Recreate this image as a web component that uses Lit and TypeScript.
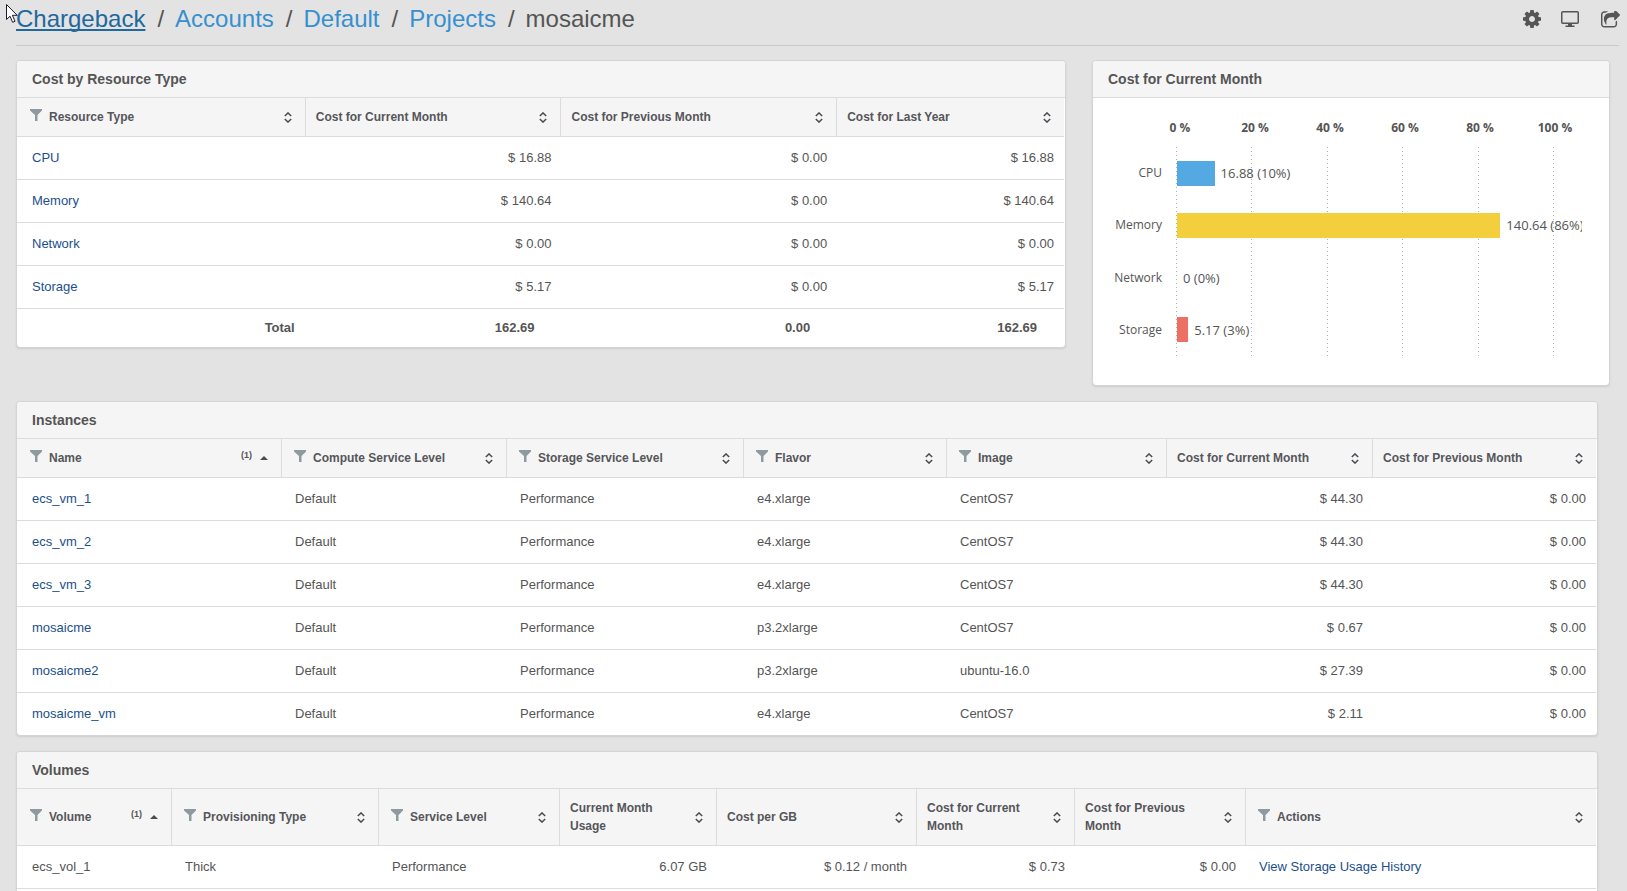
import { LitElement, html, css, svg, nothing } from "lit";
import { customElement, property } from "lit/decorators.js";
import { classMap } from "lit/directives/class-map.js";

interface Column {
  label: string;
  weight: number;
  filter?: boolean;
  sorted?: boolean;
  numeric?: boolean;
  link?: boolean;
}

interface Slice {
  name: string;
  cost: number;
  color: string;
}

const icons = {
  filter: html`<svg width="12" height="12" viewBox="0 0 12 12" aria-hidden="true">
    <path d="M0 0H12V1.5L7.5 6V12H5V6L0 1.5Z" fill="currentColor" />
  </svg>`,
  sort: html`<svg width="8" height="11" viewBox="0 0 8 11" aria-hidden="true">
    <path d="M0.8 4L4 0.9L7.2 4M0.8 7L4 10.1L7.2 7" fill="none" stroke="currentColor" stroke-width="1.5" />
  </svg>`,
  ascending: html`<svg width="8" height="4" viewBox="0 0 8 4" aria-hidden="true">
    <path d="M0 4L4 0L8 4Z" fill="currentColor" />
  </svg>`,
  gear: html`<svg width="18" height="18" viewBox="128 128 1536 1536" aria-hidden="true">
    <path
      fill="currentColor"
      d="M1152 896q0-106-75-181t-181-75-181 75-75 181 75 181 181 75 181-75 75-181zm512-109v222q0 12-8 23t-20 13l-185 28q-19 54-39 91 35 50 107 138 10 12 10 25t-9 23q-27 37-99 108t-94 71q-12 0-26-9l-138-108q-44 23-91 38-16 136-29 186-7 28-36 28h-222q-14 0-24.5-8.5t-11.5-21.5l-28-184q-49-16-90-37l-141 107q-10 9-25 9-14 0-25-11-126-114-165-168-7-10-7-23 0-12 8-23 15-21 51-66.5t54-70.5q-27-50-41-99l-183-27q-13-2-21-12.5t-8-23.5v-222q0-12 8-23t19-13l186-28q14-46 39-92-40-57-107-138-10-12-10-24 0-10 9-23 26-36 98.5-107.5t94.5-71.5q13 0 26 10l138 107q44-23 91-38 16-136 29-186 7-28 36-28h222q14 0 24.5 8.5t11.5 21.5l28 184q49 16 90 37l142-107q9-9 24-9 13 0 25 10 129 119 165 170 7 8 7 22 0 12-8 23-15 21-51 66.5t-54 70.5q26 50 41 98l183 28q13 2 21 12.5t8 23.5z"
    />
  </svg>`,
  screen: html`<svg width="18" height="18" viewBox="0 0 18 18" aria-hidden="true">
    <rect x="0.75" y="1.75" width="16.5" height="11.5" rx="1" fill="none" stroke="currentColor" stroke-width="1.5" />
    <path d="M7 13.5H11V15.5H13.5V17H4.5V15.5H7Z" fill="currentColor" />
  </svg>`,
  share: html`<svg width="19" height="17" viewBox="64 112 1664 1456" aria-hidden="true">
    <path
      fill="currentColor"
      d="M1472 989v259q0 119-84.5 203.5t-203.5 84.5h-832q-119 0-203.5-84.5t-84.5-203.5v-832q0-119 84.5-203.5t203.5-84.5h255q13 0 22.5 9.5t9.5 22.5q0 27-26 32-77 26-133 60-10 4-16 4h-112q-66 0-113 47t-47 113v832q0 66 47 113t113 47h832q66 0 113-47t47-113v-214q0-19 18-29 28-13 54-37 16-16 35-8 21 9 21 31zm237-496l-384 384q-18 19-45 19-12 0-25-5-39-17-39-59v-192h-160q-323 0-438 131-119 137-74 473 3 23-20 34-8 2-12 2-16 0-26-13-10-14-21-31t-39.5-68.5-49.5-99.5-38.5-114-17.5-122q0-49 3.5-91t14-90 28-88 47-81.5 68.5-74 94.5-61.5 124.5-48.5 159.5-30.5 196.5-11h160v-192q0-42 39-59 13-5 25-5 26 0 45 19l384 384q19 19 19 45t-19 45z"
    />
  </svg>`,
};

const resourceColumns: Column[] = [
  { label: "Resource Type", weight: 289, filter: true, link: true },
  { label: "Cost for Current Month", weight: 256, numeric: true },
  { label: "Cost for Previous Month", weight: 276, numeric: true },
  { label: "Cost for Last Year", weight: 227, numeric: true },
];

const resourceRows = [
  ["CPU", "$ 16.88", "$ 0.00", "$ 16.88"],
  ["Memory", "$ 140.64", "$ 0.00", "$ 140.64"],
  ["Network", "$ 0.00", "$ 0.00", "$ 0.00"],
  ["Storage", "$ 5.17", "$ 0.00", "$ 5.17"],
];

const resourceTotals = ["Total", "162.69", "0.00", "162.69"];

const instanceColumns: Column[] = [
  { label: "Name", weight: 265, filter: true, sorted: true, link: true },
  { label: "Compute Service Level", weight: 225, filter: true },
  { label: "Storage Service Level", weight: 237, filter: true },
  { label: "Flavor", weight: 203, filter: true },
  { label: "Image", weight: 220, filter: true },
  { label: "Cost for Current Month", weight: 206, numeric: true },
  { label: "Cost for Previous Month", weight: 223, numeric: true },
];

const instanceRows = [
  ["ecs_vm_1", "Default", "Performance", "e4.xlarge", "CentOS7", "$ 44.30", "$ 0.00"],
  ["ecs_vm_2", "Default", "Performance", "e4.xlarge", "CentOS7", "$ 44.30", "$ 0.00"],
  ["ecs_vm_3", "Default", "Performance", "e4.xlarge", "CentOS7", "$ 44.30", "$ 0.00"],
  ["mosaicme", "Default", "Performance", "p3.2xlarge", "CentOS7", "$ 0.67", "$ 0.00"],
  ["mosaicme2", "Default", "Performance", "p3.2xlarge", "ubuntu-16.0", "$ 27.39", "$ 0.00"],
  ["mosaicme_vm", "Default", "Performance", "e4.xlarge", "CentOS7", "$ 2.11", "$ 0.00"],
];

const volumeColumns: Column[] = [
  { label: "Volume", weight: 155, filter: true, sorted: true },
  { label: "Provisioning Type", weight: 207, filter: true },
  { label: "Service Level", weight: 181, filter: true },
  { label: "Current Month Usage", weight: 157, numeric: true },
  { label: "Cost per GB", weight: 200, numeric: true },
  { label: "Cost for Current Month", weight: 158, numeric: true },
  { label: "Cost for Previous Month", weight: 171, numeric: true },
  { label: "Actions", weight: 350, filter: true, link: true },
];

const volumeRows = [
  ["ecs_vol_1", "Thick", "Performance", "6.07 GB", "$ 0.12 / month", "$ 0.73", "$ 0.00", "View Storage Usage History"],
];

const slices: Slice[] = [
  { name: "CPU", cost: 16.88, color: "#55a9e3" },
  { name: "Memory", cost: 140.64, color: "#f4cf3d" },
  { name: "Network", cost: 0, color: "#8bc34a" },
  { name: "Storage", cost: 5.17, color: "#ee7065" },
];

@customElement("cost-table")
class CostTable extends LitElement {
  static styles = css`
    :host {
      display: block;
      padding-right: 1px;
    }
    table {
      width: 100%;
      table-layout: fixed;
      border-collapse: separate;
      border-spacing: 0;
    }
    th,
    td {
      box-sizing: border-box;
      text-align: left;
      border-bottom: 1px solid #dcdcdc;
    }
    .head {
      height: 39px;
      padding: 10px 13px 10px 10px;
      background: #f5f5f5;
      border-right: 1px solid #dcdcdc;
      font-size: 12px;
      line-height: 18px;
      font-weight: bold;
      color: #55565a;
    }
    .head:last-child {
      border-right: 0;
    }
    .head.filterable {
      padding-left: 12px;
    }
    .head.filterable:first-child {
      padding-left: 13px;
    }
    .inner {
      display: flex;
      align-items: center;
    }
    .label {
      flex: 1;
      padding-right: 12px;
    }
    .icon {
      display: flex;
      padding: 0;
      border: 0;
      background: none;
      color: #4b4c52;
      cursor: pointer;
    }
    .filter {
      color: #8d9aa0;
      padding-bottom: 5px;
      margin-right: 7px;
    }
    .order {
      font-size: 9px;
      line-height: 12px;
      padding-bottom: 6px;
      margin-right: 8px;
    }
    .cell {
      height: 43px;
      padding: 0 10px 0 13px;
      font-size: 13px;
      line-height: 18px;
    }
    .cell:first-child {
      padding-left: 15px;
    }
    .numeric {
      text-align: right;
    }
    .cell a {
      color: #1b4f8c;
      text-decoration: none;
    }
    tbody tr:last-child .cell {
      border-bottom: var(--last-row-border, 1px solid #dcdcdc);
    }
    tbody tr:last-child .cell.flush {
      height: 42px;
    }
    .total {
      height: 38px;
      padding: 0 27px 0 10px;
      border-bottom: 0;
      font-size: 13px;
      line-height: 18px;
      font-weight: bold;
      text-align: right;
    }
    .total:first-child {
      padding-right: 11px;
    }
  `;

  @property({ attribute: false }) columns: Column[] = [];
  @property({ attribute: false }) rows: string[][] = [];
  @property({ attribute: false }) totals?: string[];
  @property({ type: Boolean }) flush = false;

  private renderHead(c: Column) {
    return html`<th scope="col" class=${classMap({ head: true, filterable: !!c.filter })}>
      <div class="inner">
        ${c.filter
          ? html`<button class="icon filter" aria-label="Filter ${c.label}">${icons.filter}</button>`
          : nothing}
        <span class="label">${c.label}</span>
        ${c.sorted ? html`<span class="order">(1)</span>` : nothing}
        <button class="icon" aria-label="Sort by ${c.label}">${c.sorted ? icons.ascending : icons.sort}</button>
      </div>
    </th>`;
  }

  render() {
    const sum = this.columns.reduce((n, c) => n + c.weight, 0);
    return html`<table>
      <colgroup>
        ${this.columns.map((c) => html`<col style="width:${(c.weight / sum) * 100}%" />`)}
      </colgroup>
      <thead>
        <tr>
          ${this.columns.map((c) => this.renderHead(c))}
        </tr>
      </thead>
      <tbody>
        ${this.rows.map(
          (row) => html`<tr>
            ${row.map((text, i) => {
              const c = this.columns[i];
              return html`<td class=${classMap({ cell: true, numeric: !!c.numeric, flush: this.flush })}>
                ${c.link ? html`<a href="#">${text}</a>` : text}
              </td>`;
            })}
          </tr>`
        )}
      </tbody>
      ${this.totals
        ? html`<tfoot>
            <tr>
              ${this.totals.map((t) => html`<td class="total">${t}</td>`)}
            </tr>
          </tfoot>`
        : nothing}
    </table>`;
  }
}

@customElement("share-chart")
class ShareChart extends LitElement {
  static styles = css`
    :host {
      display: grid;
      grid-template-columns: 83px 1fr;
      padding: 22px 27px 29px 0;
      font-family: "Open Sans", "Noto Sans", sans-serif;
      font-size: 12px;
      line-height: 16px;
    }
    .axis {
      grid-column: 2;
      display: flex;
      justify-content: space-between;
      padding: 0 27px 11px 4px;
      font-weight: bold;
    }
    .tick {
      width: 0;
      display: flex;
      justify-content: center;
      white-space: nowrap;
    }
    .names,
    .bars {
      display: grid;
      grid-auto-rows: 1fr;
      height: 209px;
      grid-row: 2;
      align-items: center;
    }
    .names {
      grid-column: 1;
      text-align: right;
      padding-right: 14px;
      box-sizing: border-box;
    }
    .lines {
      grid-area: 2 / 2;
      display: flex;
      justify-content: space-between;
      padding-right: 28px;
    }
    .line {
      width: 1px;
      background: repeating-linear-gradient(#b0b0b0 0 1px, transparent 1px 4px);
    }
    .bars {
      grid-column: 2;
      padding-right: 29px;
      overflow: hidden;
      font-size: 13px;
    }
    .row {
      display: flex;
      align-items: center;
      height: 25px;
      padding-left: 1px;
      min-width: 0;
    }
    .bar {
      flex: none;
      height: 25px;
    }
    .value {
      margin-left: 6px;
      white-space: nowrap;
    }
  `;

  @property({ attribute: false }) data: Slice[] = [];

  render() {
    const sum = this.data.reduce((n, s) => n + s.cost, 0);
    return html`
      <div class="axis">${[0, 20, 40, 60, 80, 100].map((t) => html`<span class="tick">${t} %</span>`)}</div>
      <div class="names">${this.data.map((s) => html`<span>${s.name}</span>`)}</div>
      <div class="lines">${[0, 1, 2, 3, 4, 5].map(() => html`<span class="line"></span>`)}</div>
      <div class="bars">
        ${this.data.map((s) => {
          const pct = Math.round((s.cost / sum) * 100);
          return html`<div class="row">
            <span class="bar" style="width:${pct}%;background:${s.color}"></span>
            <span class="value">${s.cost} (${pct}%)</span>
          </div>`;
        })}
      </div>
    `;
  }
}

@customElement("app-root")
class AppRoot extends LitElement {
  static styles = css`
    :host {
      display: flex;
      flex-direction: column;
      box-sizing: border-box;
      min-height: 100vh;
      padding-left: 16px;
      background: #e3e3e3;
      color: #555555;
      font-family: "Liberation Sans", Arial, sans-serif;
      font-size: 13px;
    }
    .top {
      display: flex;
      justify-content: space-between;
      align-items: center;
      height: 45px;
      margin-right: 8px;
      border-bottom: 1px solid #c9c9c9;
    }
    .crumbs {
      display: flex;
      gap: 12px;
      margin: 0;
      padding: 0 0 8px;
      list-style: none;
      font-size: 24px;
      line-height: 28px;
    }
    .crumb {
      display: flex;
      gap: 11px;
    }
    .crumb + .crumb::before {
      content: "/";
    }
    .crumb a {
      color: #3690d0;
      text-decoration: none;
    }
    .crumb a.hovered {
      color: #21699c;
      text-decoration: underline;
      text-decoration-thickness: 2px;
      text-underline-offset: 2px;
      text-decoration-skip-ink: none;
    }
    .tools {
      display: flex;
      align-items: center;
      gap: 20px;
      padding-bottom: 7px;
      margin-right: -1px;
    }
    .tool {
      display: flex;
      padding: 0;
      border: 0;
      background: none;
      color: #555555;
      cursor: pointer;
    }
    .tool:last-child {
      padding-left: 2px;
    }
    .summary {
      display: grid;
      grid-template-columns: minmax(0, 1050fr) minmax(0, 518fr);
      align-items: start;
      gap: 26px;
      margin: 14px 17px 15px 0;
    }
    .card {
      background: #ffffff;
      border: 1px solid #d4d4d4;
      border-radius: 4px;
      box-shadow: 0 1px 2px rgba(0, 0, 0, 0.1);
      overflow: hidden;
    }
    .title {
      margin: 0;
      padding: 9px 15px;
      background: #f5f5f5;
      border-bottom: 1px solid #dcdcdc;
      font-size: 14px;
      line-height: 18px;
      font-weight: bold;
    }
    .wide {
      margin: 0 29px 15px 0;
    }
    .instances {
      --last-row-border: 0;
    }
    .rest {
      flex: 1;
      margin-bottom: 0;
      border-bottom: 0;
      border-radius: 4px 4px 0 0;
    }
    .pointer {
      position: absolute;
      left: 5px;
      top: 3px;
      pointer-events: none;
    }
  `;

  render() {
    return html`
      <header class="top">
        <nav aria-label="Breadcrumb">
          <ol class="crumbs">
            <li class="crumb"><a class="hovered" href="#">Chargeback</a></li>
            <li class="crumb"><a href="#">Accounts</a></li>
            <li class="crumb"><a href="#">Default</a></li>
            <li class="crumb"><a href="#">Projects</a></li>
            <li class="crumb"><span>mosaicme</span></li>
          </ol>
        </nav>
        <div class="tools">
          <button class="tool" aria-label="Settings">${icons.gear}</button>
          <button class="tool" aria-label="Display">${icons.screen}</button>
          <button class="tool" aria-label="Share">${icons.share}</button>
        </div>
      </header>

      <div class="summary">
        <section class="card">
          <h2 class="title">Cost by Resource Type</h2>
          <cost-table .columns=${resourceColumns} .rows=${resourceRows} .totals=${resourceTotals}></cost-table>
        </section>
        <section class="card">
          <h2 class="title">Cost for Current Month</h2>
          <share-chart .data=${slices}></share-chart>
        </section>
      </div>

      <section class="card wide instances">
        <h2 class="title">Instances</h2>
        <cost-table flush .columns=${instanceColumns} .rows=${instanceRows}></cost-table>
      </section>

      <section class="card wide rest">
        <h2 class="title">Volumes</h2>
        <cost-table .columns=${volumeColumns} .rows=${volumeRows}></cost-table>
      </section>

      <svg class="pointer" width="14" height="21" viewBox="0 0 14 21" aria-hidden="true">
        ${svg`<path d="M1.5 1.5V16.5L5 13.2L7.6 19.3L10 18.3L7.4 12.3H12.2Z" fill="#fff" stroke="#1c1c2c" stroke-width="1" />`}
      </svg>
    `;
  }
}
